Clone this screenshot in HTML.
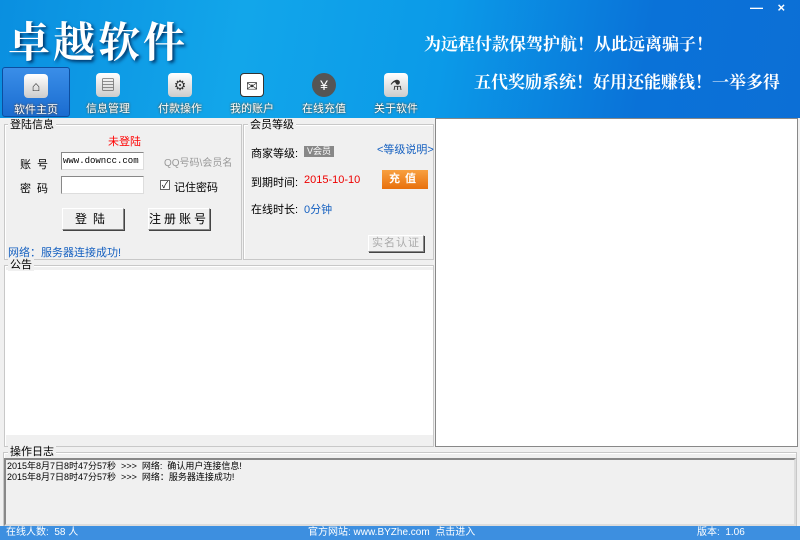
<!DOCTYPE html>
<html><head><meta charset="utf-8"><style>
*{margin:0;padding:0;box-sizing:border-box}
body{width:800px;height:540px;overflow:hidden;background:#f0f0f0;font-family:"Liberation Sans","Noto Sans CJK SC",sans-serif;font-size:12px;position:relative;color:#000}
.a{position:absolute}
#hd{left:0;top:0;width:800px;height:118px;background:linear-gradient(100deg,#0a8fe0 0%,#12a6ea 30%,#0b9ae8 55%,#0a72d8 80%,#0c6fd6 100%)}
.nav{position:absolute;top:67px;width:68px;height:50px;text-align:center;color:#fff;font-size:11px}
.nav .ic{width:24px;height:24px;margin:6px auto 0;border-radius:4px;background:linear-gradient(#fff,#ccc);color:#333;font-size:14px;line-height:24px}
.nav .t{position:absolute;top:33px;left:0;width:100%;text-shadow:0 0 2px #630}
.grp{position:absolute;border:1px solid #c8c8c8;box-shadow:inset 1px 1px #fff}
.lbl{position:absolute;background:#f0f0f0;padding:0 2px;font-size:11px;line-height:12px}
.btn{position:absolute;border:1px solid #888;border-top-color:#fff;border-left-color:#fff;box-shadow:1px 1px #444;background:#f0f0f0;text-align:center;font-size:12px;letter-spacing:6px}
.box{position:absolute;background:#fff;border:1px solid #888;border-right-color:#ddd;border-bottom-color:#ddd;font-size:9px;padding:3px 1px;font-family:"Liberation Mono",monospace}
.sl{position:absolute;font-size:17px;color:#fff;font-weight:bold;font-family:'Noto Serif CJK SC',serif;white-space:nowrap}
</style></head><body>
<div id="hd" class="a">
<div class="a" style="left:8px;top:10px;font-size:42px;color:#fff;font-family:'Noto Serif CJK SC',serif;font-weight:bold;letter-spacing:3px;text-shadow:2px 2px 3px #036">卓越软件</div>
<div class="sl" style="left:424px;top:30px">为远程付款保驾护航！从此远离骗子！</div>
<div class="sl" style="left:474px;top:68px">五代奖励系统！好用还能赚钱！一举多得</div>
<div class="a" style="left:750px;top:0;color:#fff;font-size:13px;font-weight:bold">—&nbsp;&nbsp;&nbsp;&nbsp;×</div>
<div class="nav" style="left:2px;background:linear-gradient(#3a8ee8,#1a6cd0);border:1px solid #0c4ea0;border-radius:3px"><div class="ic">⌂</div><div class="t">软件主页</div></div>
<div class="nav" style="left:74px"><div class="ic">▤</div><div class="t">信息管理</div></div>
<div class="nav" style="left:146px"><div class="ic">⚙</div><div class="t">付款操作</div></div>
<div class="nav" style="left:218px"><div class="ic" style="background:#fff;border:1px solid #333">✉</div><div class="t">我的账户</div></div>
<div class="nav" style="left:290px"><div class="ic" style="border-radius:12px;background:#555;color:#fff">¥</div><div class="t">在线充值</div></div>
<div class="nav" style="left:362px"><div class="ic">⚗</div><div class="t">关于软件</div></div>
</div>
<div class="a" style="left:435px;top:118px;width:363px;height:329px;background:#fff;border:1px solid #888"></div>
<div class="grp" style="left:4px;top:124px;width:238px;height:136px"></div>
<div class="lbl" style="left:8px;top:119px">登陆信息</div>
<div class="a" style="left:108px;top:133px;color:#f00;font-size:11px">未登陆</div>
<div class="a" style="left:20px;top:156px;font-size:11px;letter-spacing:6px">账号</div>
<div class="a" style="left:20px;top:180px;font-size:11px;letter-spacing:6px">密码</div>
<div class="box" style="left:61px;top:152px;width:83px;height:18px">www.downcc.com</div>
<div class="box" style="left:61px;top:176px;width:83px;height:18px"></div>
<div class="a" style="left:164px;top:154px;color:#999;font-size:10px">QQ号码\会员名</div>
<div class="a" style="left:160px;top:180px;width:10px;height:10px;border:1px solid #666;background:#fff;font-size:9px;line-height:8px;text-align:center">✓</div>
<div class="a" style="left:174px;top:179px;font-size:11px">记住密码</div>
<div class="btn" style="left:62px;top:208px;width:62px;height:22px;line-height:20px">登陆</div>
<div class="btn" style="left:148px;top:208px;width:62px;height:22px;line-height:20px;letter-spacing:3px">注册账号</div>
<div class="a" style="left:8px;top:244px;color:#1560c0;font-size:11px">网络：服务器连接成功!</div>
<div class="grp" style="left:243px;top:124px;width:191px;height:136px"></div>
<div class="lbl" style="left:248px;top:119px">会员等级</div>
<div class="a" style="left:251px;top:145px;font-size:11px">商家等级:</div>
<div class="a" style="left:304px;top:146px;width:30px;height:11px;background:#888;color:#fff;font-size:9px;line-height:11px;text-align:center">V会员</div>
<div class="a" style="left:377px;top:141px;color:#1560c0;font-size:11px">&lt;等级说明&gt;</div>
<div class="a" style="left:251px;top:174px;font-size:11px">到期时间:</div>
<div class="a" style="left:304px;top:174px;font-size:11px;color:#e00">2015-10-10</div>
<div class="a" style="left:382px;top:170px;width:46px;height:19px;background:linear-gradient(#f8a040,#e8700c);color:#fff;font-weight:bold;text-align:center;line-height:19px;font-size:11px;letter-spacing:5px">充值</div>
<div class="a" style="left:251px;top:201px;font-size:11px">在线时长:</div>
<div class="a" style="left:304px;top:201px;font-size:11px;color:#1560c0">0分钟</div>
<div class="btn" style="left:368px;top:235px;width:56px;height:17px;line-height:15px;font-size:11px;letter-spacing:1px;color:#aaa">实名认证</div>
<div class="grp" style="left:4px;top:265px;width:430px;height:182px"></div>
<div class="a" style="left:5px;top:270px;width:428px;height:165px;background:#fff"></div>
<div class="lbl" style="left:8px;top:259px">公告</div>
<div class="grp" style="left:3px;top:452px;width:794px;height:74px"></div>
<div class="lbl" style="left:8px;top:446px">操作日志</div>
<div class="a" style="left:4px;top:458px;width:792px;height:68px;border:2px solid #888;border-right-color:#ddd;border-bottom-color:#ddd;font-size:9px;line-height:11px;padding:1px 1px">2015年8月7日8时47分57秒 &nbsp;&gt;&gt;&gt; &nbsp;网络: &nbsp;确认用户连接信息!<br>2015年8月7日8时47分57秒 &nbsp;&gt;&gt;&gt; &nbsp;网络：服务器连接成功!</div>
<div class="a" style="left:0;top:526px;width:800px;height:14px;background:#3d8fe0;color:#fff;font-size:10px;line-height:14px">
<span class="a" style="left:6px">在线人数: &nbsp;58 人</span>
<span class="a" style="left:308px">官方网站: www.BYZhe.com &nbsp;点击进入</span>
<span class="a" style="left:697px">版本: &nbsp;1.06</span></div>
</body></html>
